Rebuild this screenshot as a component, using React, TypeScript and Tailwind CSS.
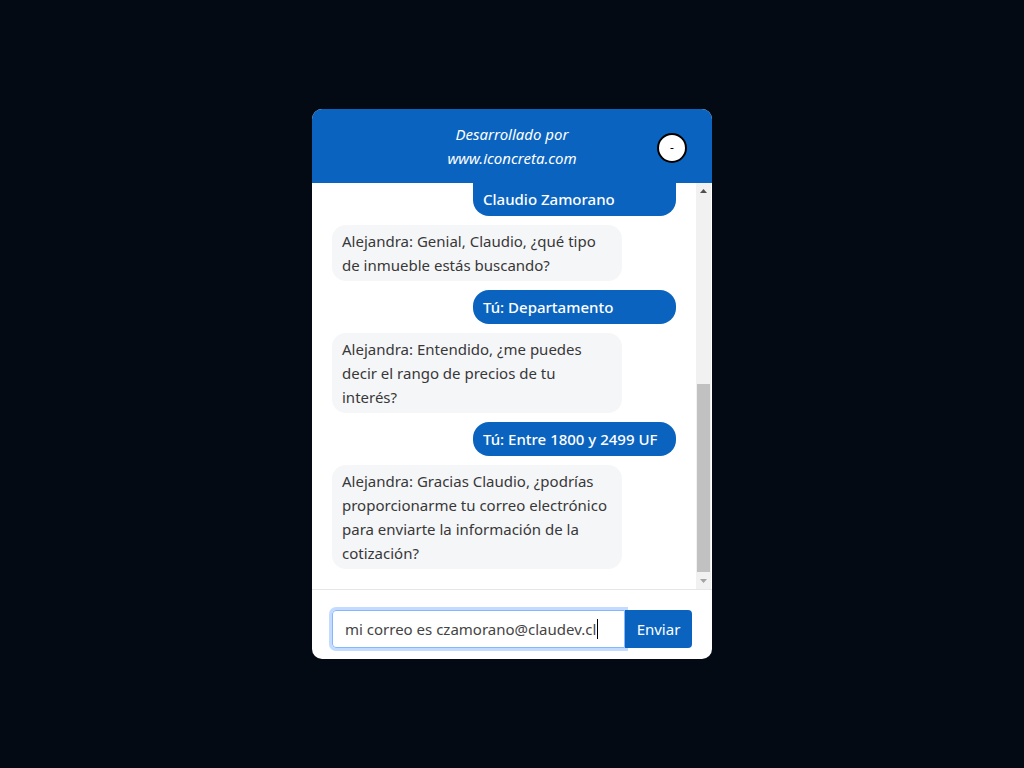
import React, { useLayoutEffect, useRef } from "react";

type Msg = { from: "bot" | "user"; text: string };

const messages: Msg[] = [
  { from: "bot", text: "Alejandra: Hola, soy Alejandra, asesora inmobiliaria de iConcreta. Estoy aquí para ayudarte a encontrar tu próximo hogar." },
  { from: "user", text: "Tú: Hola" },
  { from: "bot", text: "Alejandra: ¡Qué gusto saludarte! Para comenzar, ¿cuál es tu nombre?" },
  { from: "user", text: "Tú: Mi nombre es\nClaudio Zamorano" },
  { from: "bot", text: "Alejandra: Genial, Claudio, ¿qué tipo de inmueble estás buscando?" },
  { from: "user", text: "Tú: Departamento" },
  { from: "bot", text: "Alejandra: Entendido, ¿me puedes decir el rango de precios de tu interés?" },
  { from: "user", text: "Tú: Entre 1800 y 2499 UF" },
  { from: "bot", text: "Alejandra: Gracias Claudio, ¿podrías proporcionarme tu correo electrónico para enviarte la información de la cotización?" },
];

export default function App() {
  const ref = useRef<HTMLDivElement>(null);
  useLayoutEffect(() => {
    if (ref.current) ref.current.scrollTop = ref.current.scrollHeight;
  }, []);
  return (
    <div
      className="w-full h-[768px] bg-[#030a14] flex justify-center"
      style={{ fontFamily: '"Noto Sans", "Open Sans", sans-serif' }}
    >
      <div className="mt-[109px] w-[400px] h-[550px] bg-white rounded-[10px] overflow-hidden flex flex-col">
        <div className="relative bg-[#0a64bf] h-[74px] shrink-0 flex items-center justify-center">
          <div className="text-white italic text-[15px] leading-6 text-center">
            Desarrollado por
            <br />
            www.iconcreta.com
          </div>
          <div className="absolute right-[25px] top-[24px] w-[30px] h-[30px] rounded-full bg-white border-2 border-black flex items-center justify-center text-[12px] leading-none text-black">
            -
          </div>
        </div>
        <div className="h-[407px] shrink-0 flex border-b border-[#e6e6e6] pr-px">
          <div
            ref={ref}
            className="flex-1 overflow-y-scroll [scrollbar-width:none] flex flex-col gap-[9px] px-5 pt-5 pb-5"
          >
            {messages.map((m, i) =>
              m.from === "user" ? (
                <div
                  key={i}
                  className="self-end w-[203px] shrink-0 whitespace-pre-line bg-[#0a64bf] text-white font-medium text-[15px] leading-6 px-[10px] py-[5px] rounded-[16px]"
                >
                  {m.text}
                </div>
              ) : (
                <div
                  key={i}
                  className="self-start w-[290px] shrink-0 bg-[#f5f6f8] text-[#383838] text-[15px] leading-6 px-[10px] py-[4px] rounded-[14px]"
                >
                  {m.text}
                </div>
              )
            )}
          </div>
          <div className="w-[15px] shrink-0 bg-[#f1f1f1] flex flex-col">
            <div className="h-[15px] flex items-center justify-center">
              <svg width="7" height="4" viewBox="0 0 7 4">
                <path d="M0 4 L3.5 0 L7 4 Z" fill="#505050" />
              </svg>
            </div>
            <div className="flex-1 flex flex-col justify-end px-px">
              <div className="h-[188px] bg-[#c1c1c1]" />
            </div>
            <div className="h-[17px] flex items-center justify-center">
              <svg width="7" height="4" viewBox="0 0 7 4">
                <path d="M0 0 L7 0 L3.5 4 Z" fill="#a3a3a3" />
              </svg>
            </div>
          </div>
        </div>
        <div className="flex-1 flex items-start px-5 pt-[20px]">
          <div className="flex w-[360px]">
            <div className="w-[293px] h-[38px] border border-[#86b7fe] rounded-l-[4px] shadow-[0_0_0_3px_rgba(13,110,253,0.25)] flex items-center pl-[12px] text-[15px] text-[#444]">
              mi correo es czamorano@claudev.cl
              <span className="inline-block w-px h-[20px] bg-black ml-px" />
            </div>
            <div className="w-[67px] h-[38px] bg-[#0a64bf] text-white text-[15px] rounded-r-[4px] flex items-center justify-center">
              Enviar
            </div>
          </div>
        </div>
      </div>
    </div>
  );
}
